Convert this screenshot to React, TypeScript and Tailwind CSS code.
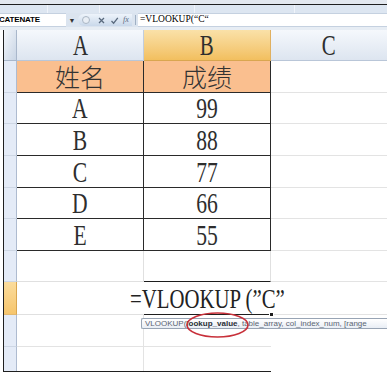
import React from "react";

const serif = "font-['Liberation_Serif','Noto_Sans_CJK_SC',serif]";

function Latin({ children, size = "text-[30px]" }: { children: React.ReactNode; size?: string }) {
  return (
    <span className={`inline-block whitespace-nowrap scale-x-[0.72] leading-none text-[#2e2e2e] ${size} ${serif}`}>
      {children}
    </span>
  );
}

function Cjk({ children }: { children: React.ReactNode }) {
  return (
    <span className="inline-block whitespace-nowrap leading-none text-[25px] text-[#333] font-light font-['Noto_Sans_CJK_SC',sans-serif]">
      {children}
    </span>
  );
}

type Row = { h: string; a?: string; b?: string; kind: "title" | "data" };

const tableRows: Row[] = [
  { h: "h-[32px]", a: "姓名", b: "成绩", kind: "title" },
  { h: "h-[31px]", a: "A", b: "99", kind: "data" },
  { h: "h-[32px]", a: "B", b: "88", kind: "data" },
  { h: "h-[32px]", a: "C", b: "77", kind: "data" },
  { h: "h-[31px]", a: "D", b: "66", kind: "data" },
  { h: "h-[32px]", a: "E", b: "55", kind: "data" },
];

const rh = "bg-[#e4ebf7] border-r border-b border-r-[#aebbd0] border-b-[#cdd6e4]";

export default function App() {
  return (
    <div className="relative w-[387px] h-[378px] overflow-hidden bg-white">
      {/* top chrome */}
      <div className="h-[4px] bg-[#e3e8ef]" />
      <div className="h-px bg-[#1f1f1f]" />
      <div className="h-[8px] bg-[#dde6f1] flex">
        <div className="w-[48px] border-r border-[#f0f4fa]" />
        <div className="w-[52px] border-r border-[#f0f4fa]" />
        <div className="w-[95px] border-r border-[#f0f4fa]" />
        <div className="w-[100px] border-r border-[#f0f4fa]" />
        <div className="flex-1" />
      </div>
      <div className="h-[14px] flex bg-[#dbe4ef] items-stretch">
        <div className="w-[66px] bg-white flex items-center border-y border-[#c5d1e0]">
          <span className="text-[8px] font-bold leading-none tracking-[-0.2px] text-black font-['Liberation_Sans',sans-serif] -ml-[1px]">
            CATENATE
          </span>
        </div>
        <div className="w-[12px] flex items-center justify-center">
          <span className="text-[7px] leading-none text-[#333]">▼</span>
        </div>
        <div className="w-[54px] my-[1px] rounded-l-full rounded-r-[3px] bg-gradient-to-b from-[#eef4fb] to-[#c9d8ea] flex items-center gap-[4px] pl-[4px]">
          <span className="w-[8px] h-[8px] rounded-full border border-[#aab6c4] bg-[#e8eef5]" />
          <svg width="9" height="9" viewBox="0 0 9 9" className="ml-[3px]">
            <path d="M2 2 L7 7 M7 2 L2 7" stroke="#5a6a7e" strokeWidth="1.3" />
          </svg>
          <svg width="9" height="9" viewBox="0 0 9 9">
            <path d="M1.5 5 L3.6 7.2 L7.8 1.8" stroke="#5a6a7e" strokeWidth="1.3" fill="none" />
          </svg>
          <span className="text-[8px] italic leading-none text-[#5a6a7e] font-['Liberation_Serif',serif]">fx</span>
        </div>
        <div className="w-[6px] flex items-center justify-center">
          <div className="w-px h-[10px] bg-[#9fb0c4]" />
        </div>
        <div className="flex-1 bg-white flex items-center pl-[2px] border-y border-[#c5d1e0]">
          <span className="text-[9.5px] leading-none text-black font-['Liberation_Serif',serif] whitespace-nowrap">
            =VLOOKUP(“C“
          </span>
        </div>
      </div>
      <div className="h-[3px] bg-[#e7edf4]" />

      {/* sheet */}
      <div className="flex">
        <div className="w-[3px]" />
        <div className="flex-1 border-l border-[#1f1f1f] flex flex-col">
          {/* column headers */}
          <div className="flex h-[31px]">
            <div className="w-[13px] border-r border-b border-[#a9b7cb] bg-gradient-to-br from-[#f4f7fb] to-[#c9d5e5]" />
            <div className="w-[127px] border-r border-b border-r-[#c2cddd] border-b-[#b9c6d8] bg-gradient-to-b from-[#f5f8fc] to-[#dde5f0] flex items-center justify-center">
              <Latin size="text-[29px]">A</Latin>
            </div>
            <div className="w-[127px] border-r border-b border-r-[#e0b060] border-b-[#d9a650] bg-gradient-to-b from-[#fae1a8] to-[#f2bf5e] flex items-center justify-center">
              <Latin size="text-[29px]">B</Latin>
            </div>
            <div className="flex-1 border-b border-[#b9c6d8] bg-gradient-to-b from-[#f5f8fc] to-[#dde5f0] flex items-center justify-center">
              <Latin size="text-[29px]">C</Latin>
            </div>
          </div>

          {tableRows.map((r, i) => (
            <div key={i} className={`flex ${r.h}`}>
              <div className={`w-[13px] ${rh}`} />
              <div
                className={`w-[127px] border-r border-b border-[#2a2a2a] flex items-center justify-center ${
                  r.kind === "title" ? "bg-[#fabf8f]" : "bg-white"
                }`}
              >
                {r.kind === "title" ? <Cjk>{r.a}</Cjk> : <Latin>{r.a}</Latin>}
              </div>
              <div
                className={`w-[127px] border-r border-b border-[#2a2a2a] flex items-center justify-center ${
                  r.kind === "title" ? "bg-[#fabf8f]" : "bg-white"
                }`}
              >
                {r.kind === "title" ? <Cjk>{r.b}</Cjk> : <Latin>{r.b}</Latin>}
              </div>
              <div className="flex-1 border-b border-[#e3e3e3]" />
            </div>
          ))}

          {/* empty row */}
          <div className="flex h-[31px]">
            <div className={`w-[13px] ${rh}`} />
            <div className="w-[127px] border-r border-b border-[#e0e0e0]" />
            <div className="w-[127px] border-r border-b border-r-[#e0e0e0] border-b-[#1e1e1e]" />
            <div className="flex-1 border-b border-[#e3e3e3]" />
          </div>

          {/* formula row */}
          <div className="flex h-[33px]">
            <div className="w-[13px] border-r border-b border-r-[#d9a650] border-b-[#e2b870] bg-gradient-to-b from-[#fbdc9c] to-[#f6c56c]" />
            <div className="w-[127px] border-b border-[#e0e0e0]" />
            <div className="relative w-[127px] border-b border-[#1e1e1e] flex items-center justify-center">
              <span className={`inline-block whitespace-nowrap scale-x-[0.77] leading-none text-[27px] text-[#222] ${serif} translate-y-[1px]`}>
                =VLOOKUP (”C”
              </span>
              <div className="absolute right-[-3px] bottom-[-3px] w-[5px] h-[5px] bg-[#1e1e1e] border border-white" />
            </div>
            <div className="flex-1 border-b border-[#e3e3e3]" />
          </div>

          {/* rows below */}
          <div className="flex h-[32px]">
            <div className={`w-[13px] ${rh}`} />
            <div className="w-[127px] border-r border-b border-[#e3e3e3]" />
            <div className="w-[127px] border-b border-[#e3e3e3]" />
            <div className="flex-1" />
          </div>
          <div className="flex h-[25px] border-b border-[#1f1f1f] w-[267px]">
            <div className="w-[13px] bg-[#e4ebf7] border-r border-[#aebbd0]" />
            <div className="w-[127px] border-r border-[#e3e3e3]" />
            <div className="w-[126px]" />
          </div>
        </div>
      </div>

      {/* function tooltip */}
      <div className="absolute left-[141px] top-[318px] h-[11px] w-[250px] rounded-l-[2px] border border-r-0 border-[#98a4b4] bg-gradient-to-b from-[#ffffff] to-[#e9eef5] flex items-center pl-[3px] whitespace-nowrap text-[8px] leading-none text-[#5b6573] font-['Liberation_Sans',sans-serif]">
        <span>VLOOKUP(</span>
        <span className="font-bold text-[#2a2f36]">lookup_value</span>
        <span>, table_array, col_index_num, [range</span>
      </div>

      {/* red ellipse */}
      <svg className="absolute left-0 top-0 pointer-events-none" width="387" height="378">
        <ellipse cx="217.5" cy="325" rx="30.5" ry="12" fill="none" stroke="#c8303a" strokeWidth="1.6" />
      </svg>
    </div>
  );
}
